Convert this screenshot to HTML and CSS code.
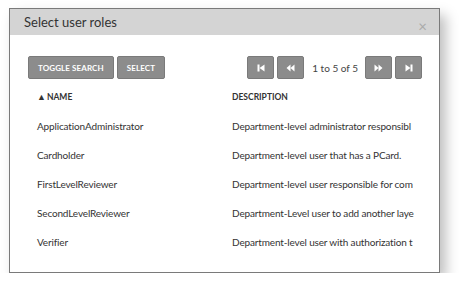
FILE: index.html
```html
<!DOCTYPE html>
<html lang="en">
<head>
  <meta charset="UTF-8"/>
  <title>Select user roles</title>
  <link rel="stylesheet" href="styles.css">
</head>
<body>
  <div class="dialog">
    <div class="dialog-header">
      <h2>Select user roles</h2>
      <span class="close">&times;</span>
    </div>

    <div class="dialog-body">
      <div class="toolbar">
        <div class="actions">
          <button class="btn">Toggle search</button>
          <button class="btn">Select</button>
        </div>
        <div class="pager">
          <button class="btn icon" title="First">
            <svg width="8" height="8" viewBox="0 0 8 8"><rect x="0.5" y="0.5" width="2" height="7" fill="#fff"/><path d="M7.5 0.5 L2.5 4 L7.5 7.5 Z" fill="#fff"/></svg>
          </button>
          <button class="btn icon" title="Previous">
            <svg width="9" height="8" viewBox="0 0 9 8"><path d="M4.5 0.5 L0.5 4 L4.5 7.5 Z M8.5 0.5 L4.5 4 L8.5 7.5 Z" fill="#fff"/></svg>
          </button>
          <span class="count">1 to 5 of 5</span>
          <button class="btn icon" title="Next">
            <svg width="9" height="8" viewBox="0 0 9 8"><path d="M0.5 0.5 L4.5 4 L0.5 7.5 Z M4.5 0.5 L8.5 4 L4.5 7.5 Z" fill="#fff"/></svg>
          </button>
          <button class="btn icon" title="Last">
            <svg width="8" height="8" viewBox="0 0 8 8"><path d="M0.5 0.5 L5.5 4 L0.5 7.5 Z" fill="#fff"/><rect x="5.5" y="0.5" width="2" height="7" fill="#fff"/></svg>
          </button>
        </div>
      </div>

      <div class="roles">
        <div class="row head">
          <div class="cell name"><span class="sort">&#9650;</span>NAME</div>
          <div class="cell desc">DESCRIPTION</div>
        </div>
        <div class="row">
          <div class="cell name">ApplicationAdministrator</div>
          <div class="cell desc">Department-level administrator responsibl</div>
        </div>
        <div class="row">
          <div class="cell name">Cardholder</div>
          <div class="cell desc">Department-level user that has a PCard.</div>
        </div>
        <div class="row">
          <div class="cell name">FirstLevelReviewer</div>
          <div class="cell desc">Department-level user responsible for com</div>
        </div>
        <div class="row">
          <div class="cell name">SecondLevelReviewer</div>
          <div class="cell desc">Department-Level user to add another laye</div>
        </div>
        <div class="row">
          <div class="cell name">Verifier</div>
          <div class="cell desc">Department-level user with authorization t</div>
        </div>
      </div>
    </div>
  </div>
</body>
</html>
```

FILE: styles.css
```css
* { box-sizing: border-box; margin: 0; padding: 0; }

body {
  background: #fff;
  font-family: Lato, 'Liberation Sans', sans-serif;
  color: #333;
  padding: 8px 0 0 9px;
}

.dialog {
  width: 431px;
  height: 265px;
  border: 1px solid #7a7a7a;
  background: #fff;
  box-shadow: 6px 7px 12px rgba(0, 0, 0, 0.25);
}

.dialog-header {
  height: 26px;
  background: #d4d4d4;
  display: flex;
  justify-content: space-between;
  align-items: center;
  padding: 0 12px 0 14px;
}

.dialog-header h2 {
  font-size: 13px;
  font-weight: normal;
  color: #333;
  margin-top: -1px;
}

.close {
  font-size: 15px;
  color: #aaa;
  margin-top: 7px;
}

.dialog-body {
  padding: 21px 17px 0 18px;
}

.toolbar {
  display: flex;
  justify-content: space-between;
  align-items: center;
}

.actions, .pager {
  display: flex;
  align-items: center;
  gap: 3px;
}

.btn {
  height: 23px;
  padding: 0 9px;
  background: #8c8c8c;
  border: 1px solid #7a7a7a;
  border-radius: 2px;
  color: #fff;
  font-family: inherit;
  font-size: 8px;
  font-weight: bold;
  text-transform: uppercase;
  letter-spacing: 0.1px;
}

.btn.icon {
  width: 27px;
  padding: 0;
  display: flex;
  align-items: center;
  justify-content: center;
}

.count {
  font-size: 10px;
  color: #444;
  margin: 0 4px 0 5px;
}

.roles {
  margin-top: 3px;
}

.row {
  display: flex;
  height: 29px;
  align-items: center;
  font-size: 10px;
  letter-spacing: -0.15px;
  color: #333;
}

.row.head {
  font-size: 8.5px;
  font-weight: bold;
  letter-spacing: 0;
  color: #333;
}

.cell {
  white-space: nowrap;
}

.name {
  width: 204px;
  padding-left: 9px;
}

.sort {
  font-size: 9px;
  margin-right: 1px;
}
```
